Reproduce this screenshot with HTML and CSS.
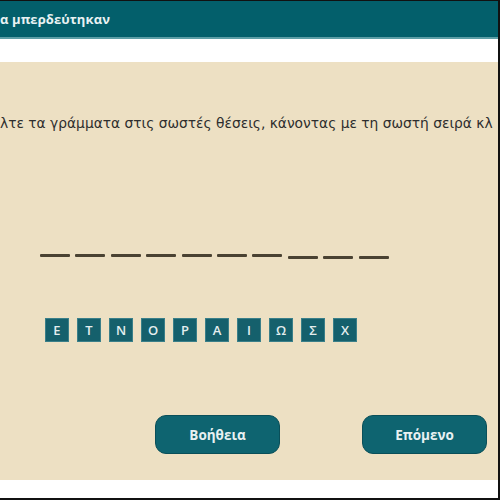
FILE: index.html
```html
<!DOCTYPE html>
<html lang="el">
<head>
<meta charset="utf-8">
<title>Γράμματα</title>
<link rel="stylesheet" href="styles.css">
</head>
<body>
<div class="frame">
  <header class="topbar"><span class="title">α μπερδεύτηκαν</span></header>
  <div class="band"></div>
  <main class="stage">
    <p class="instruction">λτε τα γράμματα στις σωστές θέσεις, κάνοντας με τη σωστή σειρά κλ</p>
    <div class="slots">
      <span class="slot"></span><span class="slot"></span><span class="slot"></span><span class="slot"></span><span class="slot"></span><span class="slot"></span><span class="slot"></span><span class="slot low"></span><span class="slot low"></span><span class="slot low"></span>
    </div>
    <div class="tiles">
      <span class="tile">Ε</span><span class="tile">Τ</span><span class="tile">Ν</span><span class="tile">Ο</span><span class="tile">Ρ</span><span class="tile">Α</span><span class="tile">Ι</span><span class="tile">Ω</span><span class="tile">Σ</span><span class="tile">Χ</span>
    </div>
    <div class="actions">
      <button class="btn">Βοήθεια</button>
      <button class="btn">Επόμενο</button>
    </div>
  </main>
  <div class="foot"></div>
</div>
</body>
</html>
```

FILE: styles.css
```css
* { box-sizing: border-box; }
html, body { margin: 0; padding: 0; }
body {
  width: 500px;
  height: 500px;
  overflow: hidden;
  background: #ffffff;
  font-family: "Open Sans", "DejaVu Sans", sans-serif;
}
.frame {
  height: 500px;
  display: flex;
  flex-direction: column;
  border-top: 1px solid #111;
  border-right: 2px solid #111;
  border-bottom: 2px solid #111;
  overflow: hidden;
}
.topbar {
  height: 38px;
  flex: none;
  background: #035f6b;
  border-bottom: 2px solid #5d9ea6;
  display: flex;
  align-items: center;
}
.title {
  margin-left: 0;
  color: #e9f2f3;
  font-weight: 700;
  font-size: 13px;
  letter-spacing: 0.1px;
}
.band {
  height: 23px;
  flex: none;
  background: #ffffff;
}
.stage {
  height: 418px;
  flex: none;
  background: #ede0c3;
  display: flex;
  flex-direction: column;
  overflow: hidden;
}
.instruction {
  margin: 51px 0 0 0;
  line-height: 20px;
  font-family: "DejaVu Sans", sans-serif;
  font-size: 13.8px;
  color: #2e2e2e;
  white-space: nowrap;
}
.slots {
  margin-top: 121px;
  padding-left: 40px;
  display: flex;
  align-items: flex-start;
  gap: 5.4px;
  height: 5px;
}
.slot {
  width: 30px;
  height: 3px;
  background: #4a4232;
  border-radius: 1px;
}
.slot.low { margin-top: 2px; }
.tiles {
  margin-top: 59px;
  padding-left: 45px;
  display: flex;
  gap: 8px;
}
.tile {
  width: 24px;
  height: 24px;
  background: #15606c;
  border: 1px solid #3a7f89;
  color: #e4eeef;
  font-size: 13px;
  font-weight: 600;
  display: flex;
  align-items: center;
  justify-content: center;
}
.actions {
  margin-top: 73px;
  padding-left: 155px;
  display: flex;
  gap: 82px;
}
.btn {
  width: 125px;
  height: 39px;
  border-radius: 11px;
  background: #0e6470;
  border: 1px solid #0a4f59;
  color: #e8f1f2;
  font-family: "Open Sans", "DejaVu Sans", sans-serif;
  font-weight: 700;
  font-size: 13.5px;
  padding: 0;
}
.foot {
  flex: 1;
  background: #ffffff;
}
```
